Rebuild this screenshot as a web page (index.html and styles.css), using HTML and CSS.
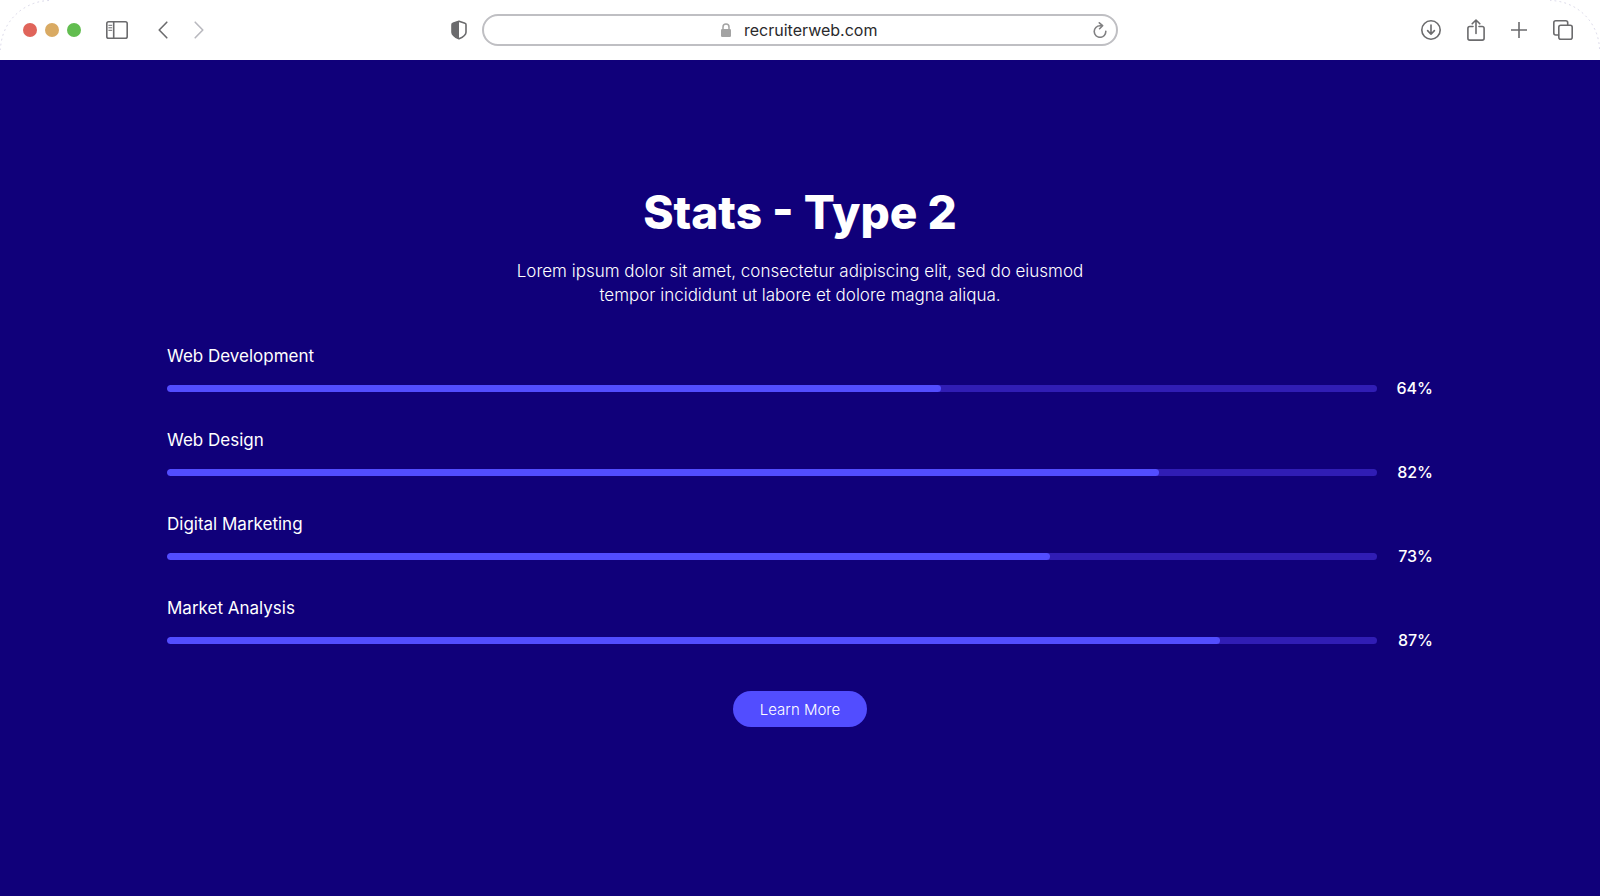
FILE: index.html
```html
<!DOCTYPE html>
<html lang="en">
<head>
<meta charset="utf-8">
<meta name="viewport" content="width=device-width, initial-scale=1">
<title>Stats - Type 2</title>
<link rel="stylesheet" href="styles.css">
</head>
<body>
<header class="toolbar">
  <svg class="corner corner-left" width="50" height="50" viewBox="0 0 50 50" aria-hidden="true"><path d="M.5 50A50 50 0 0 1 50 .5"/></svg>
  <svg class="corner corner-right" width="50" height="50" viewBox="0 0 50 50" aria-hidden="true"><path d="M0 .5A50 50 0 0 1 49.500 50"/></svg>
  <div class="toolbar-start">
    <div class="lights"><span class="light light-close"></span><span class="light light-minimize"></span><span class="light light-zoom"></span></div>
    <button class="tool" type="button" aria-label="Sidebar"><svg width="22" height="18" viewBox="0 0 22 18"><rect x=".8" y=".8" width="20.400" height="16.400" rx="1.800"/><path d="M7.700 1v16"/><path class="thin" d="M2.800 4.300h3M2.800 6.800h3M2.800 9.300h3"/></svg></button>
    <div class="history">
      <button class="tool" type="button" aria-label="Back"><svg width="10" height="18" viewBox="0 0 10 18"><path d="M8.800 1.200 1.200 9l7.600 7.800"/></svg></button>
      <button class="tool tool-muted" type="button" aria-label="Forward"><svg width="10" height="18" viewBox="0 0 10 18"><path d="m1.200 1.200 7.600 7.800-7.600 7.800"/></svg></button>
    </div>
    <button class="tool shield" type="button" aria-label="Privacy report"><svg width="16" height="20" viewBox="0 0 16 20"><path d="M8 1.200 14 3.300c.7.200 1 .7 1 1.400v7.500c0 2.500-2.500 4.600-7 6.600-4.500-2-7-4.100-7-6.600V4.700c0-.7.300-1.200 1-1.400Z"/><path class="solid" d="M8 1 2 3.200c-.7.300-1 .8-1 1.500v7.500c0 2.500 2.500 4.700 7 6.700Z"/></svg></button>
  </div>
  <div class="address">
    <div class="address-inner">
      <svg class="lock" width="10" height="14" viewBox="0 0 10 14" aria-hidden="true"><path d="M2 6.500V4a3 3 0 0 1 6 0v2.500"/><rect class="solid" y="6" width="10" height="8" rx="1.200"/></svg>
      <input class="url" type="text" value="recruiterweb.com" aria-label="Address">
    </div>
    <button class="tool reload" type="button" aria-label="Reload"><svg width="14" height="16" viewBox="0 0 14 16"><path d="M9.500 3.700H7A5.800 5.800 0 1 0 12.800 9.200M6.300.8l3.300 2.900-3 3"/></svg></button>
  </div>
  <div class="toolbar-end">
    <button class="tool" type="button" aria-label="Downloads"><svg width="20" height="20" viewBox="0 0 20 20"><circle cx="10" cy="10" r="9.200"/><path d="M10 5v9M6.600 10.600l3.400 3.600 3.400-3.600"/></svg></button>
    <button class="tool" type="button" aria-label="Share"><svg width="18" height="22" viewBox="0 0 18 22"><path d="M6 7.500H2.800c-1.200 0-1.900.7-1.900 1.900v9.800c0 1.200.7 1.900 1.900 1.900h12.400c1.200 0 1.900-.7 1.900-1.900V9.400c0-1.200-.7-1.900-1.900-1.900H12M9 14.500V1.200M5.200 4.800 9 1l3.800 3.800"/></svg></button>
    <button class="tool" type="button" aria-label="New tab"><svg width="16" height="16" viewBox="0 0 16 16"><path d="M8 0v16M0 8h16"/></svg></button>
    <button class="tool" type="button" aria-label="Tab overview"><svg width="20" height="20" viewBox="0 0 20 20"><rect x="5.800" y="5.300" width="13.400" height="13.900" rx="2"/><path d="M5.500 15H2.800c-1.300 0-2-.7-2-2V2.800c0-1.300.7-2 2-2h9.900c1.300 0 2 .7 2 2v2.300"/></svg></button>
  </div>
</header>
<main class="stats">
  <h1 class="title">Stats - Type 2</h1>
  <p class="intro">Lorem ipsum dolor sit amet, consectetur adipiscing elit, sed do eiusmod tempor incididunt ut labore et dolore magna aliqua.</p>
  <div class="bars">
    <section class="stat"><h2 class="label">Web Development</h2><div class="row"><div class="track"><div class="fill" style="width:64%"></div></div><span class="value">64%</span></div></section>
    <section class="stat"><h2 class="label">Web Design</h2><div class="row"><div class="track"><div class="fill" style="width:82%"></div></div><span class="value">82%</span></div></section>
    <section class="stat"><h2 class="label">Digital Marketing</h2><div class="row"><div class="track"><div class="fill" style="width:73%"></div></div><span class="value">73%</span></div></section>
    <section class="stat"><h2 class="label">Market Analysis</h2><div class="row"><div class="track"><div class="fill" style="width:87%"></div></div><span class="value">87%</span></div></section>
  </div>
  <button class="more" type="button">Learn More</button>
</main>
</body>
</html>
```

FILE: styles.css
```css
* { box-sizing: border-box; }

body {
  margin: 0;
  min-height: 100vh;
  display: flex;
  flex-direction: column;
  background: #10007a;
  color: #fff;
  font-family: Inter, "Liberation Sans", sans-serif;
}

button, input { font: inherit; color: inherit; border: 0; background: none; padding: 0; }

svg { display: block; fill: none; stroke: currentColor; stroke-width: 1.6; stroke-linecap: round; stroke-linejoin: round; }
.solid { fill: currentColor; stroke: none; }
.thin { stroke-width: 1; }

/* Browser toolbar */
.toolbar {
  position: relative;
  height: 60px;
  display: grid;
  grid-template-columns: 1fr minmax(0, 636px) 1fr;
  align-items: center;
  background: #fff;
  color: #6b6b6d;
}
.corner { position: absolute; top: 0; color: #d9d7e8; stroke-width: 1; stroke-dasharray: 1 4; pointer-events: none; }
.corner-left { left: 0; }
.corner-right { right: 0; }

.toolbar-start { display: flex; align-items: center; padding: 0 15px 0 23px; }
.lights { display: flex; gap: 8px; margin-right: 25px; }
.light { width: 14px; height: 14px; border-radius: 50%; }
.light-close { background: #e0645a; }
.light-minimize { background: #d9aa63; }
.light-zoom { background: #62bd50; }
.history { display: flex; gap: 26px; margin-left: 30px; }
.tool-muted { color: #b8b8be; }
.shield { margin-left: auto; }

.address {
  display: flex;
  align-items: center;
  height: 32px;
  padding: 0 9px 0 24px;
  border: 2px solid #bfbfc3;
  border-radius: 16px;
}
.address-inner { flex: 1; display: flex; align-items: center; justify-content: center; gap: 13px; }
.lock { color: #a3a3a3; stroke-width: 1.5; }
.url { width: 136px; height: 24px; color: #2a2a2c; font-size: 16px; }
.reload { color: #808082; }

.toolbar-end { display: flex; align-items: center; justify-content: flex-end; gap: 26px; padding-right: 27px; }

/* Stats */
.stats {
  width: 80%;
  max-width: 1266px;
  margin: 0 auto;
  padding: 123px 0 48px;
  display: flex;
  flex-direction: column;
  align-items: center;
}
.title { margin: 0 0 18px; font-size: 46px; line-height: 58px; font-weight: 800; }
.intro { margin: 0 0 37px; max-width: 600px; font-size: 17px; line-height: 24px; font-weight: 300; text-align: center; }
.bars { width: 100%; display: flex; flex-direction: column; gap: 28px; }
.label { margin: 0 0 8px; font-size: 17px; line-height: 24px; font-weight: 400; }
.row { display: flex; align-items: center; }
.track { flex: 1; height: 7px; border-radius: 4px; background: #301db4; overflow: hidden; }
.fill { height: 100%; border-radius: 4px; background: #524dff; }
.value { width: 56px; font-size: 16px; line-height: 24px; font-weight: 500; text-align: right; }
.more {
  margin-top: 39px;
  padding: 0 27px;
  height: 36px;
  border-radius: 18px;
  background: #524dff;
  font-size: 15px;
  font-weight: 300;
}
```
